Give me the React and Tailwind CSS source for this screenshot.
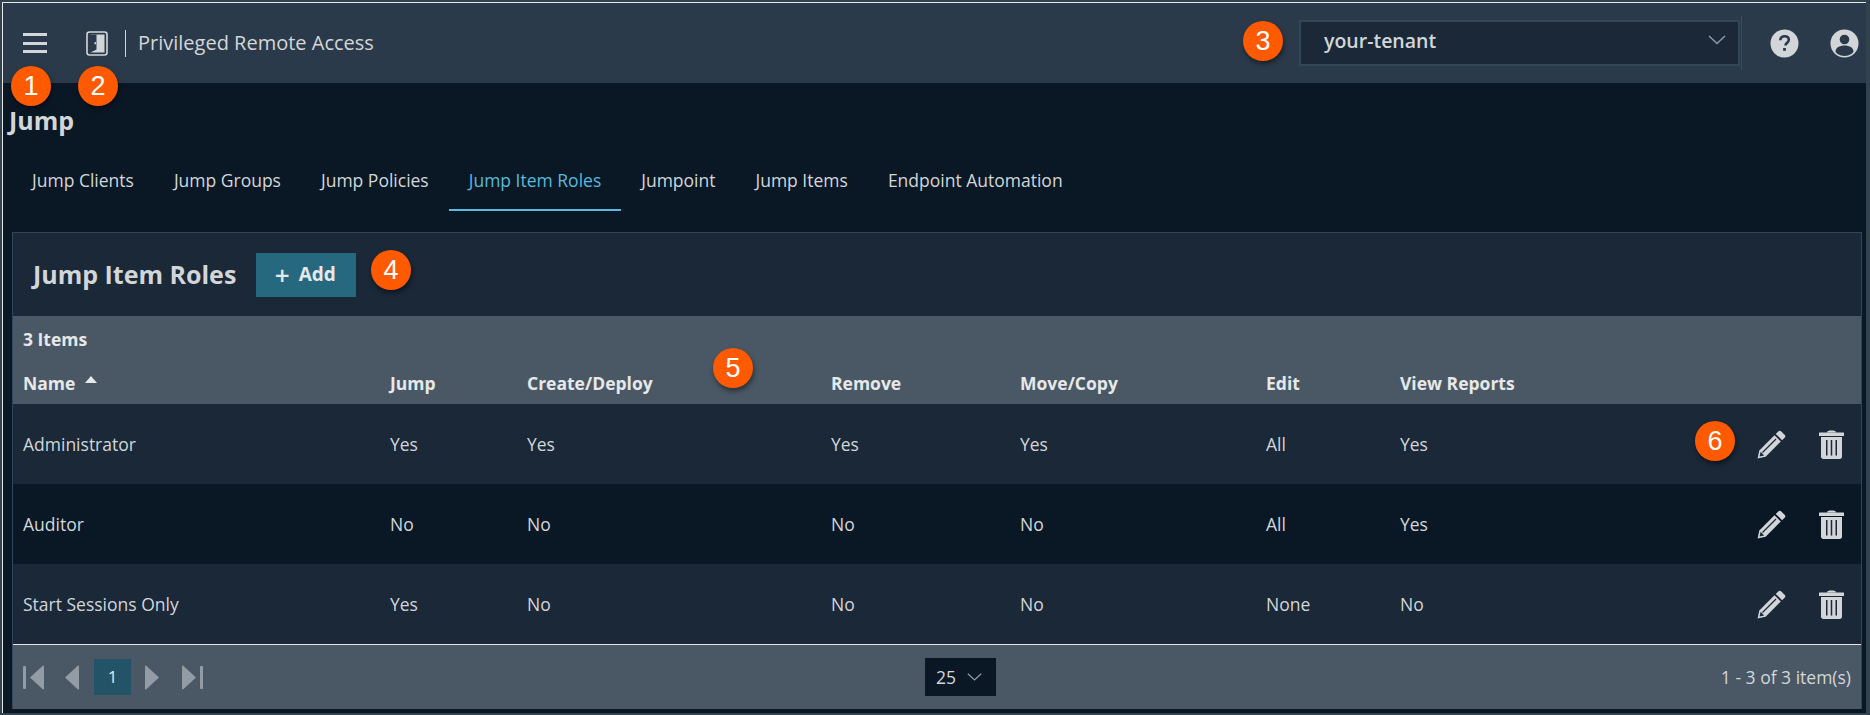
const columns = [
  { key: 'name', label: 'Name', width: 'w-[367px]' },
  { key: 'jump', label: 'Jump', width: 'w-[137px]' },
  { key: 'create', label: 'Create/Deploy', width: 'w-[304px]' },
  { key: 'remove', label: 'Remove', width: 'w-[189px]' },
  { key: 'move', label: 'Move/Copy', width: 'w-[246px]' },
  { key: 'edit', label: 'Edit', width: 'w-[134px]' },
  { key: 'reports', label: 'View Reports', width: 'w-[300px]' },
]

const rows = [
  { name: 'Administrator', jump: 'Yes', create: 'Yes', remove: 'Yes', move: 'Yes', edit: 'All', reports: 'Yes' },
  { name: 'Auditor', jump: 'No', create: 'No', remove: 'No', move: 'No', edit: 'All', reports: 'Yes' },
  { name: 'Start Sessions Only', jump: 'Yes', create: 'No', remove: 'No', move: 'No', edit: 'None', reports: 'No' },
]

const tabs = [
  { label: 'Jump Clients' },
  { label: 'Jump Groups' },
  { label: 'Jump Policies' },
  { label: 'Jump Item Roles', active: true },
  { label: 'Jumpoint' },
  { label: 'Jump Items' },
  { label: 'Endpoint Automation' },
]

function Badge({ n, className }) {
  return (
    <span className={`absolute flex h-10 w-10 items-center justify-center rounded-full bg-[#ff5a00] text-[27px] leading-none text-white shadow-[1px_3px_5px_rgba(0,0,0,0.45)] font-['Liberation_Sans',sans-serif] ${className}`}>
      {n}
    </span>
  )
}

function DoorIcon() {
  return (
    <svg width="22" height="25" viewBox="0 0 22 25" className="block">
      <rect x="1" y="1" width="20" height="23" rx="2.500" fill="none" stroke="#d3d6d8" strokeWidth="1.600" />
      <path d="M4 3.500h14.500v18H4l6-3V6.500z" fill="#d3d6d8" />
      <path d="M4 3.500h6.500v15L4 21.500z" fill="#2b3a4a" />
      <rect x="8.500" y="11" width="1.400" height="2.400" fill="#d3d6d8" />
    </svg>
  )
}

function HelpIcon() {
  return (
    <svg width="29" height="29" viewBox="0 0 29 29" className="block">
      <circle cx="14.500" cy="14.500" r="14" fill="#d3d6d8" />
      <path d="M10.300 11.300c0-2.600 1.900-4.100 4.300-4.100 2.500 0 4.200 1.500 4.200 3.600 0 1.600-.8 2.500-2 3.300-1 .7-1.300 1.100-1.300 2.300" fill="none" stroke="#2b3a4a" strokeWidth="2.600" />
      <rect x="13.100" y="19" width="2.800" height="2.800" fill="#2b3a4a" />
    </svg>
  )
}

function UserIcon() {
  return (
    <svg width="29" height="29" viewBox="0 0 29 29" className="block">
      <circle cx="14.500" cy="14.500" r="14" fill="#d3d6d8" />
      <circle cx="14.500" cy="10.500" r="4.800" fill="#2b3a4a" />
      <path d="M5.500 22.500c0-3.800 4-6 9-6s9 2.200 9 6c0 1.100-3.800 4.500-9 4.500s-9-3.400-9-4.500z" fill="#2b3a4a" />
    </svg>
  )
}

function PencilIcon() {
  return (
    <svg width="29" height="29" viewBox="0 0 29 29" className="block">
      <path d="M21.500 1.200c.7-.7 1.800-.7 2.500 0l3.800 3.800c.7.7.7 1.800 0 2.500l-2.700 2.700-6.300-6.300z" fill="#d3d6d8" />
      <path d="M17.500 5.200l6.300 6.300L8.600 26.700.6 28.400l1.700-8z" fill="#d3d6d8" />
      <path d="M19 9L5.500 22.500" stroke="#1a2838" strokeWidth="1.200" />
      <path d="M3.600 21.800l3.600 3.600-4.600 1z" fill="#1a2838" />
    </svg>
  )
}

function TrashIcon() {
  return (
    <svg width="25" height="29" viewBox="0 0 25 29" className="block">
      <path d="M8 2.500C8 1 9.500.5 12.500.5S17 1 17 2.500z" fill="#d3d6d8" />
      <rect x="0" y="2.500" width="25" height="3.500" rx=".5" fill="#d3d6d8" />
      <path d="M2 7h21v19.500c0 1.400-1 2.500-2.300 2.500H4.300C3 29 2 27.900 2 26.500z" fill="#d3d6d8" />
      <rect x="7" y="10" width="1.500" height="15.500" fill="#1a2838" />
      <rect x="11.750" y="10" width="1.500" height="15.500" fill="#1a2838" />
      <rect x="16.500" y="10" width="1.500" height="15.500" fill="#1a2838" />
    </svg>
  )
}

function PagerArrow({ dir, bar }) {
  return (
    <svg width="21" height="25" viewBox="0 0 21 25" className={`block ${dir === 'right' ? '-scale-x-100' : ''}`}>
      {bar && <rect x="0" y="1" width="3" height="23" rx="1" fill="#939ca4" />}
      <path d={bar ? 'M7 12.500L20 .5c.7 0 1 .5 1 1v22c0 .5-.3 1-1 1z' : 'M6 12.500L19 .5c.7 0 1 .5 1 1v22c0 .5-.3 1-1 1z'} fill="#939ca4" strokeLinejoin="round" />
    </svg>
  )
}

function Chevron({ className, color }) {
  return (
    <svg width="18" height="10" viewBox="0 0 18 10" className={className}>
      <path d="M1 1l8 7.500L17 1" fill="none" stroke={color} strokeWidth="1.600" />
    </svg>
  )
}

export default function App() {
  return (
    <div className="relative h-[715px] w-[1870px] overflow-hidden bg-[#33424f] pt-[2px] pl-[2px] pr-[4px] pb-[2px] font-['Open_Sans',sans-serif] text-[#d3d6d8]">
      <Badge n="1" className="left-[11px] top-[66px]" />
      <Badge n="2" className="left-[78px] top-[66px]" />
      <Badge n="3" className="left-[1243px] top-[21px]" />
      <Badge n="4" className="left-[371px] top-[250px]" />
      <Badge n="5" className="left-[713px] top-[348px]" />
      <Badge n="6" className="left-[1695px] top-[421px]" />

      <div className="flex h-full flex-col border-t border-l border-[#e6e8ea] bg-[#0a1826]">
        {/* top bar */}
        <header className="flex h-[80px] shrink-0 items-center bg-[#2b3a4a] pr-[7px]">
          <div className="ml-[20px] flex h-[20px] w-[24px] flex-col justify-between">
            <span className="h-[3px] bg-[#d3d6d8]" />
            <span className="h-[3px] bg-[#d3d6d8]" />
            <span className="h-[3px] bg-[#d3d6d8]" />
          </div>
          <div className="ml-[39px]"><DoorIcon /></div>
          <div className="ml-[17px] h-[27px] w-px bg-[#d3d6d8]" />
          <span className="ml-[12px] text-[20px] leading-none text-[#d3d6d8]">Privileged Remote Access</span>

          <div className="ml-auto flex h-[46px] w-[441px] items-center justify-between border-2 border-[#334557] bg-[#1a2838] pl-[23px] pr-[12px]">
            <span className="-mt-[4px] text-[19.5px] font-semibold text-[#d3d6d8]">your-tenant</span>
            <Chevron className="-mt-[7px]" color="#8e979f" />
          </div>
          <div className="ml-[1px] h-[54px] w-px bg-[#3c4c5b]" />
          <div className="ml-[28px]"><HelpIcon /></div>
          <div className="ml-[31px]"><UserIcon /></div>
        </header>

        <h1 className="mt-[20px] ml-[6px] text-[25px] leading-[34px] font-bold text-[#d3d6d8]">Jump</h1>

        <nav className="mt-[23px] ml-[9px] flex items-start">
          {tabs.map(t => (
            <div
              key={t.label}
              className={`h-[51px] px-[20px] pt-[8px] text-[17.5px] leading-[24px] ${t.active ? 'border-b-2 border-[#5ab9dc] text-[#5ab9dc]' : 'text-[#d3d6d8]'}`}
            >
              {t.label}
            </div>
          ))}
        </nav>

        <section className="mt-[21px] ml-[9px] mr-[4px] flex flex-col border border-b-0 border-[#334557] bg-[#1a2838]">
          <div className="flex h-[83px] items-center pl-[20px]">
            <h2 className="text-[25px] leading-none font-bold text-[#d3d6d8]">Jump Item Roles</h2>
            <button className="ml-[20px] flex h-[44px] w-[100px] items-center justify-center gap-[9px] bg-[#26697f] text-[19px] font-bold text-[#e6e8ea]">
              <span className="-ml-[2px] text-[26px] leading-none font-semibold">+</span>
              Add
            </button>
          </div>

          <div className="h-[88px] bg-[#495864] pl-[10px]">
            <div className="flex h-[46px] items-center text-[17.5px] font-bold text-[#e6e8ea]">3 Items</div>
            <div className="flex h-[42px] items-center text-[17.5px] font-bold text-[#e6e8ea]">
              {columns.map(c => (
                <div key={c.key} className={`flex items-center gap-[10px] ${c.width}`}>
                  {c.label}
                  {c.key === 'name' && <span className="mb-[7px] h-0 w-0 border-x-[6.5px] border-b-[7px] border-x-transparent border-b-[#e6e8ea]" />}
                </div>
              ))}
            </div>
          </div>

          {rows.map((row, i) => (
            <div key={row.name} className={`flex h-[80px] items-center pl-[10px] text-[17.5px] ${i === 1 ? 'bg-[#0a1826]' : 'bg-[#1a2838]'}`}>
              {columns.map(c => (
                <div key={c.key} className={c.width}>{row[c.key]}</div>
              ))}
              <div className="ml-[57px] flex items-center gap-[33px]">
                <PencilIcon />
                <TrashIcon />
              </div>
            </div>
          ))}

          <div className="h-px bg-[#e6e8ea]" />
          <div className="relative flex h-[64px] items-center bg-[#495864] pl-[10px] pr-[10px]">
            <PagerArrow dir="left" bar />
            <div className="ml-[15px]"><PagerArrow dir="left" /></div>
            <div className="ml-[14px] flex h-[36px] w-[37px] items-center justify-center bg-[#225366] text-[17px] text-[#e6e8ea]">1</div>
            <div className="ml-[13px]"><PagerArrow dir="right" /></div>
            <div className="ml-[17px]"><PagerArrow dir="right" bar /></div>
            <div className="ml-[722px] flex h-[38px] w-[71px] items-center gap-[11px] bg-[#0a1826] pl-[11px] text-[17.5px] text-[#d3d6d8]">
              25
              <Chevron color="#8e979f" className="w-[15px]" />
            </div>
            <span className="ml-auto text-[17.5px] text-[#d3d6d8]">1 - 3 of 3 item(s)</span>
          </div>
        </section>
      </div>
    </div>
  )
}
